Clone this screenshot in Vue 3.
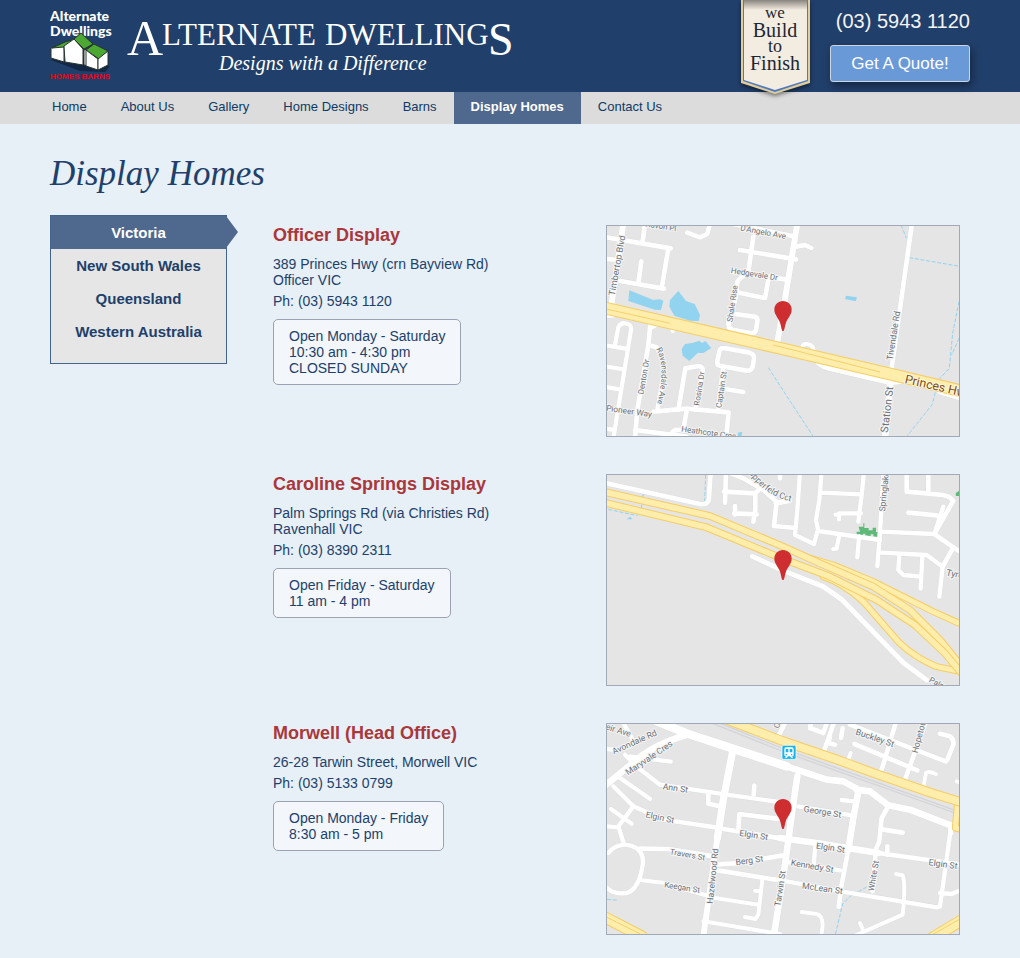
<script setup>
const nav = ['Home', 'About Us', 'Gallery', 'Home Designs', 'Barns', 'Display Homes', 'Contact Us']
const states = ['Victoria', 'New South Wales', 'Queensland', 'Western Australia']

// Map geometry is drawn at three units per pixel.
const locations = [
  {
    name: 'Officer Display',
    address: ['389 Princes Hwy (crn Bayview Rd)', 'Officer VIC'],
    phone: '(03) 5943 1120',
    hours: ['Open Monday - Saturday', '10:30 am - 4:30 pm', 'CLOSED SUNDAY'],
    map: {
      top: 18,
      pin: 243,
      rails: [],
      white: [
        [18, 'M70 10 L35 250'],
        [14, 'M10 50 L212 85 M135 10 L128 65 M205 85 L185 205 M10 115 L50 120 M60 183 L192 206 M124 124 L115 190'],
        [14, 'M262 38 L300 52 L322 42 L330 10 M390 10 L588 50 M460 50 L446 150 L412 185 L408 230 L385 310'],
        [14, 'M420 90 L588 118 M400 155 L555 178 M505 180 L495 234 L410 217 M405 282 L462 290 Q474 292 472 304 L468 330 Q464 342 450 339 L398 329 Q384 325 387 312'],
        [18, 'M592 10 L548 280 L532 365'],
        [14, 'M588 80 L615 75 L634 84'],
        [14, 'M372 384 L448 398 Q464 402 462 416 L458 440 Q454 454 440 452 L362 438 Q350 436 352 424 L358 394 Q360 384 372 384 M370 440 L355 565 M375 507 L430 516'],
        [14, 'M235 570 L256 445 L295 438 Q310 440 308 452 L286 570 M160 575 L260 566 L386 577 L378 655 M261 566 L250 630 M215 642 Q218 628 240 630 L330 640'],
        [14, 'M152 300 L145 375 L170 382 Q198 420 190 470 L172 572 M145 375 L112 570 L105 655 M105 630 L260 650 M175 310 L150 325'],
        [13, 'M10 290 L45 285 M45 375 L55 322 Q60 308 76 310 Q96 312 93 330 L40 655 M10 375 L84 387 M10 438 L72 448 M10 500 L60 508 M10 625 L45 630 M222 305 L218 333'],
        [14, 'M936 10 L870 480'],
        [20, 'M872 480 L855 655'],
        [16, 'M655 428 Q668 442 710 450 L870 487 L900 485 M1020 515 L1085 535'],
        [12, 'M605 386 Q606 370 622 372 Q642 376 640 392']
      ],
      yellow: [[32, 'M10 263 L545 386 L870 462 L1085 513']],
      lanes: ['M10 265 L210 310', 'M520 375 L840 456'],
      lakes: ['M88 211 L160 240 L180 238 L190 243 L183 270 L165 269 L85 243Z', 'M210 240 L235 213 L258 243 L284 252 L300 285 L296 303 L270 302 L223 287 L208 260Z', 'M245 388 L255 372 L280 368 L298 362 L306 369 L316 363 L334 384 L310 399 L293 399 L268 423 L248 407Z', 'M738 227 L771 232 L767 244 L735 237Z', 'M414 638 L427 635 L424 650 L413 650Z'],
      parks: [],
      dash: ['M505 443 L555 520 L640 650', 'M903 15 L920 55', 'M928 113 L1085 140', 'M1077 245 L1058 340 L1048 445 L1015 480 L997 553 L920 650', 'M1077 355 L1055 405'],
      labels: [
        ['Timbertop Blvd', 60, 138, -80, 27], ['Ravon Pl', 182, 27, 9, 24], ["D'Angelo Ave", 488, 44, 11, 24], ['Hedgevale Dr', 462, 170, 9, 24],
        ['Shale Rise', 405, 252, -82, 24], ['Denton Dr', 139, 472, -80, 24], ['Ravensdale Ave', 0, 0, 0, 24, 'M164 380 Q202 430 170 560'],
        ['Rosina Dr', 306, 507, -81, 24], ['Captain St', 372, 510, -81, 24], ['Pioneer Way', 86, 582, 8, 25], ['Heathcote Cres', 325, 646, 8, 24],
        ['Tivendale Rd', 889, 348, -81, 26], ['Station St', 872, 570, -83, 32], ['Princes Hwy', 1012, 512, 13, 37, '', 'brown']
      ]
    }
  },
  {
    name: 'Caroline Springs Display',
    address: ['Palm Springs Rd (via Christies Rd)', 'Ravenhall VIC'],
    phone: '(03) 8390 2311',
    hours: ['Open Friday - Saturday', '11 am - 4 pm'],
    map: {
      top: 15,
      pin: 240,
      rails: [],
      white: [
        [14, 'M10 38 L300 102 Q325 106 327 85 L332 5 M378 5 L375 98 M372 65 L465 70 L490 48 M466 70 L466 120 L460 155 M405 108 L405 134 M402 130 L470 133'],
        [14, 'M380 5 L430 25 L490 60 L530 95 L522 168 L585 174 M527 100 L570 92 M540 5 L540 25'],
        [13, 'M600 5 L592 120 L585 195 L642 222 L652 185 M665 5 L658 90 L648 150 L655 183 L840 210 M665 68 L785 73 M792 5 L785 75 L775 155 M783 130 L725 130 L707 134 M717 130 L717 148'],
        [13, 'M718 195 L710 235 L700 237 M777 200 L772 262 M850 10 L840 190 L835 250 L832 288 M840 185 L1003 192 L1030 110 M845 248 L980 255 L1028 290 L1018 380 M898 255 L895 300 L910 315 L962 320 M967 260 L962 356'],
        [14, 'M1003 192 L1060 92 Q1050 75 1010 73 L920 65 L920 5 M985 68 L985 5 M1003 192 L1060 232 L1085 248 M1060 232 L1028 290 M925 128 L1010 136 L1020 145'],
        [15, 'M457 259 L545 300 L670 350 L725 388 L910 578 L980 630']
      ],
      yellow: [
        [15, 'M620 262 L700 285 L820 335 L1000 425 L1085 463'],
        [15, 'M670 320 Q730 340 790 395 L895 515 Q940 560 1010 590 L1085 605'],
        [17, 'M10 65 L330 138 L545 228 L660 280 L820 350 L930 420 L1020 510 L1085 590'],
        [17, 'M10 97 L320 172 L545 265 L690 320 L830 390 L945 465 L1035 550 L1085 610']
      ],
      lanes: [],
      lakes: ['M80 148 L90 140 L98 148Z'],
      parks: ['M776 170 H790 V160 H793 V174 H806 V181 H818 V173 H828 V186 H833 V200 H820 V193 H812 V200 H796 V191 H789 V197 H770 V185 H780Z', 'M1067 70 L1080 60 V78 H1068Z'],
      dash: ['M317 15 L314 95', 'M130 70 L124 115', 'M25 118 L112 137'],
      labels: [
        ['Copperfeld Cct', 0, 0, 0, 26, 'M424 -26 Q485 86 597 98'], ['Springlake', 861, 65, -84, 26], ['Tyrone', 1077, 324, 12, 27], ['Palm Springs', 1048, 668, 28, 24]
      ]
    }
  },
  {
    name: 'Morwell (Head Office)',
    address: ['26-28 Tarwin Street, Morwell VIC'],
    phone: '(03) 5133 0799',
    hours: ['Open Monday - Friday', '8:30 am - 5 pm'],
    map: {
      top: 18,
      pin: 243,
      rails: ['M310 5 L560 105 L1085 292', 'M345 10 L560 96 L1085 284'],
      white: [
        [26, 'M170 10 L265 48 L560 145'],
        [20, 'M560 145 L680 185 L730 190 L770 212'],
        [20, 'M10 207 L110 125 Q170 75 270 48'],
        [20, 'M770 215 L810 220 L865 262 L930 275 L1060 325'],
        [13, 'M70 15 L98 65 M10 92 L50 96 M75 110 L115 150 L180 200 M90 115 L212 131 M40 205 L100 265 L190 305 L360 330'],
        [13, 'M60 180 L150 242 M33 273 L95 317 M100 265 L55 325 L72 378 M10 324 L55 328 M180 200 L380 230 L560 255'],
        [22, 'M398 100 L370 245 L352 360'],
        [18, 'M352 360 L310 655'],
        [14, 'M325 230 L325 257 L360 265 M463 203 L461 230 M415 340 L418 288 L555 305 M352 330 L545 362 M120 392 L205 393 L340 415 M340 440 L405 436 L550 412 M340 455 L545 488'],
        [12, 'M120 486 L195 495 L345 540 L475 560 M487 485 L475 590 L466 603 L435 597 M465 518 L480 520 M310 610 L540 648'],
        [13, 'M25 405 Q48 375 90 382 Q137 395 127 447 Q115 515 80 525 Q40 530 22 510'],
        [20, 'M592 175 L578 270 L555 440 L522 650'],
        [13, 'M595 265 L755 292 M725 246 L760 250'],
        [20, 'M775 220 L760 300 L745 395'],
        [14, 'M745 395 L725 500 L716 567'],
        [20, 'M540 360 L650 375 L835 405'],
        [13, 'M835 405 L1085 440 M645 390 L642 435 M560 432 L720 457 M560 490 L740 523 L1010 568 L1020 565 L1050 350 M1020 525 L1055 528 L1085 515'],
        [14, 'M862 270 L845 300 L838 370 L825 400 M850 335 L908 344 M862 385 L862 410 M827 400 L818 520'],
        [12, 'M888 468 L908 472 Q918 500 908 590 L760 655 M780 615 L790 638 M605 582 L650 588 Q675 595 665 645'],
        [14, 'M560 5 L535 55 M635 5 L630 30 L670 45 L680 15 M705 5 L670 105 M690 55 L685 75 L705 80 M728 30 L723 60 M750 20 L1037 130 M763 78 L952 157 M890 5 L845 155 M980 5 L915 185 M1020 47 L1050 55 Q1063 65 1060 80 L1042 125'],
        [12, 'M752 105 L745 125 M740 142 L765 154 M620 98 L660 105 M970 207 L978 165 Q985 158 1008 168 M1070 190 L1085 195'],
        [16, 'M1052 320 L1052 345']
      ],
      yellow: [[15, 'M1073 250 L1066 330 L1085 335'], [23, 'M380 5 L545 68 L720 128 L820 165 L1000 227 L1085 253'], [30, 'M5 593 L125 655'], [30, 'M980 670 L1085 607']],
      lanes: ['M5 590 L125 650', 'M980 660 L1085 600'],
      lakes: [],
      parks: [],
      dash: ['M21 544 L55 547', 'M800 507 L750 535 L728 558 L706 650'],
      labels: [
        ['Weir Ave', 42, 42, 17, 26], ['Avondale Rd', 107, 80, -24, 26], ['Maryvale Cres', 152, 127, -34, 26], ['Ann St', 225, 219, 8, 26], ['Elgin St', 178, 307, 12, 26],
        ['Travers St', 261, 418, 10, 24], ['Keegan St', 245, 516, 9, 24], ['Hazelwood Rd', 347, 475, -84, 26], ['Berg St', 449, 436, -8, 26], ['Elgin St', 460, 360, 9, 26],
        ['Tarwin St', 549, 513, -81, 26], ['George St', 666, 290, 9, 26], ['Elgin St', 690, 398, 9, 26], ['Kennedy St', 635, 453, 10, 26], ['McLean St', 666, 520, 8, 26],
        ['White St', 829, 475, -80, 25], ['Elgin St', 1028, 447, 8, 26], ['Buckley St', 822, 68, 19, 26], ['Hopetoun', 967, 52, -75, 26], ['Ch', 540, 17, -80, 24]
      ],
      station: true
    }
  }
]
</script>

<template>
  <div class="page">
    <header class="banner">
      <a class="brand" href="#" aria-label="Alternate Dwellings home">
        <svg class="logo" width="470" height="88" viewBox="0 0 470 88">
          <g class="logo-name">
            <text x="0" y="21">Alternate</text>
            <text x="0" y="36">Dwellings</text>
          </g>
          <path d="M1 60 L30 71 L55 72 L60 66 L16 52Z" fill="#142846" />
          <g stroke="#26352c" stroke-width="1" stroke-linejoin="round">
            <path d="M1 48 L14 44 V62 L1 58Z" fill="#fff" />
            <path d="M2 48 L15 42 L25 39 L14 47Z" fill="#4ca832" />
            <path d="M14 46 L24 39 L33 49 V65 L15 62Z" fill="#fff" />
            <path d="M24 39 L31 33 L43 44 L34 49Z" fill="#4ca832" />
            <path d="M34 50 L45 46 V67 L34 65Z" fill="#fff" />
            <path d="M36 50 L44 44 L58 51 L49 59Z" fill="#4ca832" />
            <path d="M36 50 L48 59 V70 L36 66Z" fill="#fff" />
            <path d="M48 59 L58 51 V65 L48 70Z" fill="#fff" />
          </g>
          <text class="logo-sub" x="0" y="79">HOMES BARNS</text>
          <g class="wordmark">
            <text x="77" y="55" font-size="50">A</text>
            <text x="112" y="45" font-size="31">LTERNATE</text>
            <text x="275" y="45" font-size="31">DWELLING</text>
            <text x="438" y="55" font-size="46">S</text>
          </g>
          <text class="tagline" x="169" y="70">Designs with a Difference</text>
        </svg>
      </a>
      <div class="contact">
        <span class="phone">(03) 5943 1120</span>
        <button class="quote" type="button">Get A Quote!</button>
      </div>
      <svg class="ribbon" width="78" height="102" viewBox="0 0 78 102">
        <defs>
          <linearGradient id="fold" x1="0" y1="0" x2="0" y2="1">
            <stop offset="0" stop-color="#88847f" />
            <stop offset="1" stop-color="#f3ece1" />
          </linearGradient>
        </defs>
        <g class="ribbon-body">
          <path d="M4 0 H73 V83 L38 94 L4 83Z" fill="#dfcd9c" />
          <path d="M6 0 H71 V81 L38 92 L6 81Z" fill="#4f78bd" />
          <path d="M7 0 H70 V80 L38 90 L7 80Z" fill="#f3ece1" />
        </g>
        <rect x="7" y="0" width="63" height="10" fill="url(#fold)" />
        <g class="ribbon-text">
          <text x="38" y="18" font-size="17">we</text>
          <text x="38" y="37" font-size="20">Build</text>
          <text x="38" y="52" font-size="18">to</text>
          <text x="38" y="70" font-size="20">Finish</text>
        </g>
      </svg>
    </header>

    <nav class="menu">
      <a v-for="item in nav" :key="item" href="#" :class="{ active: item === 'Display Homes' }">{{ item }}</a>
    </nav>

    <main>
      <h1>Display Homes</h1>
      <div class="content">
        <ul class="states">
          <li v-for="(s, i) in states" :key="s" :class="{ current: i === 0 }"><a href="#">{{ s }}</a></li>
        </ul>
        <div class="locations">
          <section v-for="loc in locations" :key="loc.name" class="location">
            <div class="details">
              <h2>{{ loc.name }}</h2>
              <p class="address"><span v-for="l in loc.address" :key="l">{{ l }}</span></p>
              <p class="ph">Ph: {{ loc.phone }}</p>
              <p class="hours"><span v-for="l in loc.hours" :key="l">{{ l }}</span></p>
            </div>
            <svg class="map" :viewBox="`21 ${loc.map.top} 1056 630`" role="img" :aria-label="`Map of ${loc.name}`">
              <path v-for="d in loc.map.lakes" :key="d" :d="d" fill="#92d3f0" />
              <path v-for="d in loc.map.dash" :key="d" :d="d" class="stream" />
              <path v-for="d in loc.map.rails" :key="d" :d="d" class="rail" />
              <path v-for="d in loc.map.parks" :key="d" :d="d" fill="#5fb979" />
              <path v-for="r in loc.map.white" :key="'c' + r[1]" :d="r[1]" class="road casing" :stroke-width="r[0] + 2" />
              <path v-for="r in loc.map.white" :key="r[1]" :d="r[1]" class="road" :stroke-width="r[0]" />
              <template v-for="r in loc.map.yellow" :key="r[1]">
                <path :d="r[1]" class="highway edge" :stroke-width="r[0] + 6" />
                <path :d="r[1]" class="highway" :stroke-width="r[0]" />
              </template>
              <path v-for="d in loc.map.lanes" :key="d" :d="d" class="lane" />
              <template v-for="(t, i) in loc.map.labels" :key="i">
                <template v-if="t[5]">
                  <path :id="'curve-' + t[0].replace(' ', '-')" :d="t[5]" fill="none" />
                  <text class="label" :font-size="t[4]">
                    <textPath :href="'#curve-' + t[0].replace(' ', '-')" startOffset="50%">{{ t[0] }}</textPath>
                  </text>
                </template>
                <text v-else class="label" :class="t[6]" :font-size="t[4]" :transform="`translate(${t[1]} ${t[2]}) rotate(${t[3]})`">{{ t[0] }}</text>
              </template>
              <g v-if="loc.map.station">
                <rect x="546" y="82" width="42" height="42" rx="5" fill="#18b4ea" stroke="#fff" stroke-width="2" />
                <path d="M558 88 H576 Q581 88 581 94 V111 Q581 115 576 115 L580 119 H573 L570 115 H564 L561 119 H554 L558 115 Q553 115 553 111 V94 Q553 88 558 88Z" fill="#fff" />
                <path d="M557 93 H565 V103 H557Z M569 93 H577 V103 H569Z M557 108 H561 V112 H557Z M573 108 H577 V112 H573Z" fill="#18b4ea" />
              </g>
              <g :transform="`translate(549 ${loc.map.pin})`">
                <path d="M0 0 C-15 0 -26 11 -26 26 C-26 42 -12 52 -8 68 C-5 78 -4 90 0 90 C4 90 5 78 8 68 C12 52 26 42 26 26 C26 11 15 0 0 0Z" fill="#cf2e30" />
              </g>
            </svg>
          </section>
        </div>
      </div>
    </main>
  </div>
</template>

<style>
body {
  margin: 0;
  background: #e7eff7;
}
</style>

<style scoped>
.page {
  color: #213f6b;
  font: 14px/16px "Liberation Sans", Arial, sans-serif;
  background: #e7eff7;
}
.banner {
  position: relative;
  display: flex;
  justify-content: space-between;
  height: 92px;
  padding: 0 50px;
  background: #213f6b;
}
.logo {
  display: block;
}
.logo-name {
  fill: #fff;
  font: 900 14px Lato, sans-serif;
}
.logo-sub {
  fill: #f0000f;
  font: bold 8px "Liberation Sans", sans-serif;
}
.wordmark {
  fill: #fff;
  font-family: "Liberation Serif", serif;
}
.tagline {
  fill: #fff;
  font: italic 20px "Liberation Serif", serif;
}
.contact {
  display: flex;
  flex-direction: column;
  align-items: flex-end;
  gap: 12px;
  padding-top: 9px;
}
.phone {
  color: #f3f3f3;
  font-size: 20px;
  line-height: 24px;
}
.quote {
  width: 140px;
  height: 37px;
  padding: 0;
  border: 1px solid #ccd5e2;
  border-radius: 3px;
  background: #6a99d8;
  color: #fff;
  font: 17px "Liberation Sans", Arial, sans-serif;
  box-shadow: 2px 4px 8px rgba(0, 0, 0, 0.4);
}
.ribbon {
  position: absolute;
  top: 0;
  right: 205px;
  z-index: 1;
}
.ribbon-body {
  filter: drop-shadow(0 2px 2px rgba(0, 0, 0, 0.5));
}
.ribbon-text {
  fill: #1c2733;
  font-family: "Liberation Serif", serif;
  text-anchor: middle;
}
.menu {
  display: flex;
  height: 32px;
  padding-left: 35px;
  background: #dcdcdc;
}
.menu a {
  padding: 0 17px;
  color: #0d3a66;
  font: 13px/30px "Liberation Sans", Arial, sans-serif;
  text-decoration: none;
}
.menu a.active {
  background: #4f688e;
  color: #fff;
  font-weight: bold;
}
main {
  padding: 26px 60px 23px 50px;
}
h1 {
  margin: 0;
  height: 65px;
  font: italic 35px/48px "Liberation Serif", serif;
}
.content {
  display: grid;
  grid-template-columns: 177px 1fr;
  gap: 46px;
  align-items: start;
}
.states {
  margin: 0;
  padding: 0 0 15px;
  border: 1px solid #42628f;
  background: #e6e6e6;
  list-style: none;
  text-align: center;
}
.states li {
  position: relative;
  height: 33px;
}
.states a {
  color: #213f6b;
  font: bold 15px/34px "Liberation Sans", Arial, sans-serif;
  text-decoration: none;
}
.states .current {
  background: #4f688e;
}
.states .current a {
  color: #fff;
}
.states .current::after {
  content: "";
  position: absolute;
  left: 100%;
  top: 0;
  border-left: 12px solid #4f688e;
  border-top: 16px solid transparent;
  border-bottom: 16px solid transparent;
}
.locations {
  display: grid;
  gap: 37px;
  padding-top: 10px;
}
.location {
  display: grid;
  grid-template-columns: 1fr 354px;
}
h2 {
  margin: 0 0 11px;
  color: #a9373b;
  font-size: 18px;
  line-height: 20px;
}
p {
  margin: 0;
}
p span {
  display: block;
}
.address {
  margin-bottom: 5px;
}
.hours {
  width: fit-content;
  margin-top: 10px;
  padding: 8px 15px;
  border: 1px solid #9ba3b2;
  border-radius: 5px;
  background: #f3f6fb;
}
.map {
  display: block;
  box-sizing: border-box;
  width: 100%;
  border: 1px solid #a1a8b6;
  background: #e5e5e5;
  font-family: Roboto, sans-serif;
}
.road,
.highway {
  fill: none;
  stroke: #fff;
  stroke-linecap: round;
  stroke-linejoin: round;
}
.casing {
  stroke: #dadcdf;
}
.highway {
  stroke: #ffeeab;
}
.edge {
  stroke: #f5cd66;
}
.lane {
  fill: none;
  stroke: #f5d06f;
  stroke-width: 3;
}
.stream {
  fill: none;
  stroke: #92d3f0;
  stroke-width: 3;
  stroke-dasharray: 12 5;
}
.rail {
  fill: none;
  stroke: #d2d4d8;
  stroke-width: 4;
}
.label {
  fill: #6b7177;
  stroke: #f7f7f7;
  stroke-width: 6;
  stroke-linejoin: round;
  paint-order: stroke;
  text-anchor: middle;
}
.brown {
  fill: #7d4e12;
  stroke: #fff6dc;
}
</style>
